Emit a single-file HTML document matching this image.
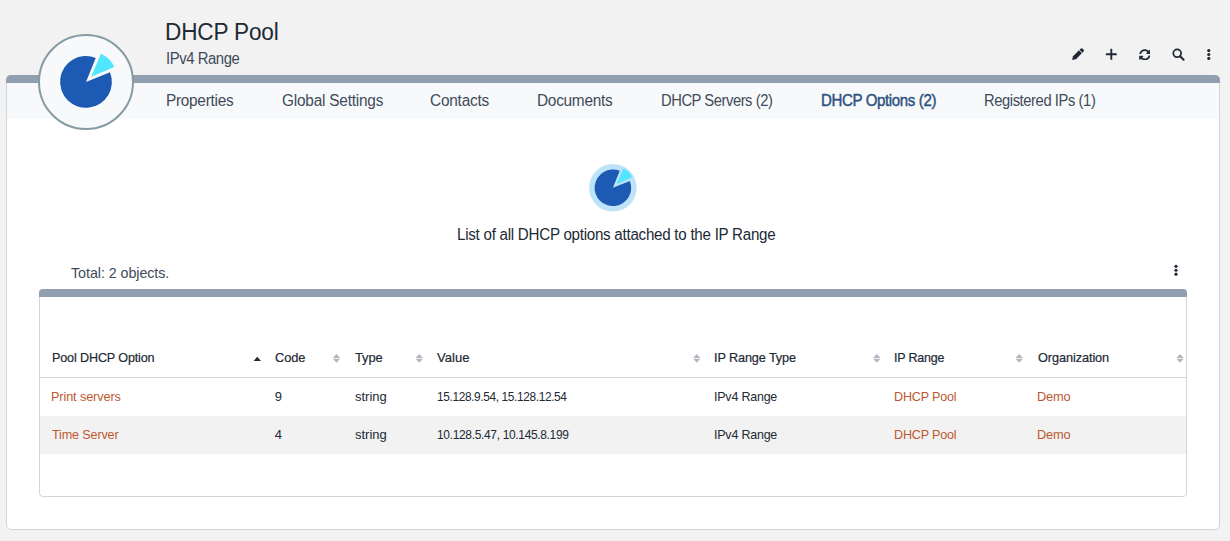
<!DOCTYPE html><html><head><meta charset="utf-8"><style>
html,body{margin:0;padding:0;}
body{width:1230px;height:541px;background:#f2f2f2;position:relative;overflow:hidden;font-family:"Liberation Sans",sans-serif;}
.t{position:absolute;white-space:nowrap;}
.abs{position:absolute;}
</style></head><body>
<div class="abs" style="left:6px;top:75px;width:1212px;height:453px;border:1px solid #ced6de;border-radius:5px;background:#fff;"></div>
<div class="abs" style="left:6px;top:75px;width:1214px;height:8px;background:#929fb1;border-radius:5px 5px 0 0;"></div>
<div class="abs" style="left:7px;top:83px;width:1212px;height:36px;background:#f8f9fa;"></div>
<div class="abs" style="left:38px;top:34px;width:92px;height:92px;border:2px solid #859ba3;border-radius:50%;background:#f8f9fa;"></div>
<svg class="abs" style="left:0;top:0" width="200" height="140"><path d="M86,81.9 L110.01,72.20 A25.9,25.9 0 1 1 95.70,57.89 Z" fill="#1c5ab4"/><path d="M91.13,76.77 L100.94,53.65 A25.122999999999998,25.122999999999998 0 0 1 114.25,66.96 Z" fill="#52e5ff"/></svg>
<svg class="abs" style="left:560px;top:140px" width="110" height="100"><circle cx="52.89999999999998" cy="47.80000000000001" r="23.8" fill="#bee3f8"/><path d="M52.89999999999998,47.80000000000001 L69.87,40.94 A18.3,18.3 0 1 1 59.76,30.83 Z" fill="#1c5ab4"/><path d="M56.78,43.92 L63.36,28.42 A16.836000000000002,16.836000000000002 0 0 1 72.28,37.34 Z" fill="#52e5ff"/></svg>
<div class="abs" style="left:39px;top:289px;width:1146px;height:206px;border:1px solid #ced6de;border-radius:4px;background:#fff;"></div>
<div class="abs" style="left:39px;top:289px;width:1148px;height:8px;background:#929fb1;border-radius:4px 4px 0 0;"></div>
<div class="abs" style="left:40px;top:377px;width:1146px;height:1px;background:#ced6de;"></div>
<div class="abs" style="left:40px;top:416px;width:1146px;height:38px;background:#f2f2f2;"></div>
<svg class="abs" style="left:0;top:0" width="1230" height="541"><g transform="translate(1077.6,54.6) rotate(-45)" fill="#212934"><path d="M-7.8,0 L-4.4,-2.05 L4.0,-2.05 L4.0,2.05 L-4.4,2.05 Z"/><path d="M4.8,-2.05 L6.3,-2.05 A1.5,1.5 0 0 1 7.8,-0.55 L7.8,0.55 A1.5,1.5 0 0 1 6.3,2.05 L4.8,2.05 Z"/></g><g fill="#212934"><rect x="1110.35" y="48.8" width="1.9" height="11" rx="0.6"/><rect x="1105.8" y="53.35" width="11" height="1.9" rx="0.6"/></g><g fill="none" stroke="#212934" stroke-width="1.75"><circle cx="1177.2" cy="53.3" r="3.9"/><path d="M1180.2,56.3 L1183.6,59.7" stroke-width="2.1" stroke-linecap="round"/></g><circle cx="1208.8" cy="50.60" r="1.6" fill="#212934"/><circle cx="1208.8" cy="54.50" r="1.6" fill="#212934"/><circle cx="1208.8" cy="58.40" r="1.6" fill="#212934"/><circle cx="1176" cy="266.30" r="1.6" fill="#212934"/><circle cx="1176" cy="270.25" r="1.6" fill="#212934"/><circle cx="1176" cy="274.20" r="1.6" fill="#212934"/><path d="M253.60000000000002,361.0 L257.3,356.7 L261.0,361.0 Z" fill="#212934"/><path d="M332.9,357.9 L336.5,353.9 L340.1,357.9 Z M332.9,358.79999999999995 L336.5,362.79999999999995 L340.1,358.79999999999995 Z" fill="#b1b6bf"/><path d="M415.7,357.9 L419.3,353.9 L422.90000000000003,357.9 Z M415.7,358.79999999999995 L419.3,362.79999999999995 L422.90000000000003,358.79999999999995 Z" fill="#b1b6bf"/><path d="M693.1999999999999,357.9 L696.8,353.9 L700.4,357.9 Z M693.1999999999999,358.79999999999995 L696.8,362.79999999999995 L700.4,358.79999999999995 Z" fill="#b1b6bf"/><path d="M873.1999999999999,357.9 L876.8,353.9 L880.4,357.9 Z M873.1999999999999,358.79999999999995 L876.8,362.79999999999995 L880.4,358.79999999999995 Z" fill="#b1b6bf"/><path d="M1015.6,357.9 L1019.2,353.9 L1022.8000000000001,357.9 Z M1015.6,358.79999999999995 L1019.2,362.79999999999995 L1022.8000000000001,358.79999999999995 Z" fill="#b1b6bf"/><path d="M1176.5,357.9 L1180.1,353.9 L1183.6999999999998,357.9 Z M1176.5,358.79999999999995 L1180.1,362.79999999999995 L1183.6999999999998,358.79999999999995 Z" fill="#b1b6bf"/></svg>
<svg class="abs" style="left:1138.6px;top:48.6px" width="11.6" height="11.6" viewBox="0 0 512 512"><path fill="#212934" d="M370.72 133.28C339.458 104.008 298.888 87.962 255.848 88c-77.458.068-144.328 53.178-162.791 126.85-1.344 5.363-6.122 9.15-11.651 9.15H24.103c-7.498 0-13.194-6.807-11.807-14.176C33.933 94.924 134.813 8 256 8c66.448 0 126.791 26.136 171.315 68.685L463.03 40.97C478.149 25.851 504 36.559 504 57.941V192c0 13.255-10.745 24-24 24H345.941c-21.382 0-32.09-25.851-16.971-40.971l41.75-41.749zM32 296h134.059c21.382 0 32.090 25.851 16.971 40.971l-41.75 41.75c31.262 29.273 71.835 45.319 114.876 45.28 77.418-.07 144.315-53.144 162.787-126.849 1.344-5.363 6.122-9.15 11.651-9.15h57.304c7.498 0 13.194 6.807 11.807 14.176C478.067 417.076 377.187 504 256 504c-66.448 0-126.791-26.136-171.315-68.685L48.970 471.030C33.851 486.149 8 475.441 8 454.059V320c0-13.255 10.745-24 24-24z"/></svg>
<div class="t" style="left:165.44px;top:20.50px;font-size:23px;line-height:23px;color:#212934;font-weight:400;letter-spacing:-0.173px;transform:scaleX(0.9821);transform-origin:0 0;">DHCP Pool</div>
<div class="t" style="left:166.07px;top:50.50px;font-size:16px;line-height:16px;color:#404b5a;font-weight:400;letter-spacing:-0.464px;transform:scaleX(0.9290);transform-origin:0 0;">IPv4 Range</div>
<div class="t" style="left:166.44px;top:92.50px;font-size:16px;line-height:16px;color:#404b5a;font-weight:400;letter-spacing:-0.246px;transform:scaleX(0.9558);transform-origin:0 0;">Properties</div>
<div class="t" style="left:281.54px;top:92.50px;font-size:16px;line-height:16px;color:#404b5a;font-weight:400;letter-spacing:-0.211px;transform:scaleX(0.9602);transform-origin:0 0;">Global Settings</div>
<div class="t" style="left:430.04px;top:92.50px;font-size:16px;line-height:16px;color:#404b5a;font-weight:400;letter-spacing:-0.232px;transform:scaleX(0.9623);transform-origin:0 0;">Contacts</div>
<div class="t" style="left:536.94px;top:92.50px;font-size:16px;line-height:16px;color:#404b5a;font-weight:400;letter-spacing:-0.271px;transform:scaleX(0.9610);transform-origin:0 0;">Documents</div>
<div class="t" style="left:660.78px;top:92.50px;font-size:16px;line-height:16px;color:#404b5a;font-weight:400;letter-spacing:-0.483px;transform:scaleX(0.9211);transform-origin:0 0;">DHCP Servers (2)</div>
<div class="t" style="left:820.56px;top:92.50px;font-size:16px;line-height:16px;color:#2c5282;font-weight:400;letter-spacing:-0.372px;-webkit-text-stroke:0.45px #2c5282;transform:scaleX(0.9381);transform-origin:0 0;">DHCP Options (2)</div>
<div class="t" style="left:983.68px;top:92.50px;font-size:16px;line-height:16px;color:#404b5a;font-weight:400;letter-spacing:-0.435px;transform:scaleX(0.9197);transform-origin:0 0;">Registered IPs (1)</div>
<div class="t" style="left:457.35px;top:226.50px;font-size:16px;line-height:16px;color:#212934;font-weight:400;letter-spacing:-0.274px;transform:scaleX(0.9465);transform-origin:0 0;">List of all DHCP options attached to the IP Range</div>
<div class="t" style="left:71.20px;top:265.75px;font-size:14.5px;line-height:14.5px;color:#404b5a;font-weight:400;letter-spacing:-0.061px;transform:scaleX(0.9856);transform-origin:0 0;">Total: 2 objects.</div>
<div class="t" style="left:51.83px;top:351.00px;font-size:13px;line-height:13px;color:#212934;font-weight:400;letter-spacing:-0.151px;-webkit-text-stroke:0.2px #212934;transform:scaleX(0.9692);transform-origin:0 0;">Pool DHCP Option</div>
<div class="t" style="left:274.80px;top:351.00px;font-size:13px;line-height:13px;color:#212934;font-weight:400;letter-spacing:-0.108px;-webkit-text-stroke:0.2px #212934;transform:scaleX(0.9845);transform-origin:0 0;">Code</div>
<div class="t" style="left:354.50px;top:351.00px;font-size:13px;line-height:13px;color:#212934;font-weight:400;letter-spacing:-0.067px;-webkit-text-stroke:0.2px #212934;transform:scaleX(0.9893);transform-origin:0 0;">Type</div>
<div class="t" style="left:437.00px;top:351.00px;font-size:13px;line-height:13px;color:#212934;font-weight:400;letter-spacing:0.075px;-webkit-text-stroke:0.2px #212934;">Value</div>
<div class="t" style="left:714.02px;top:351.00px;font-size:13px;line-height:13px;color:#212934;font-weight:400;letter-spacing:-0.116px;-webkit-text-stroke:0.2px #212934;transform:scaleX(0.9757);transform-origin:0 0;">IP Range Type</div>
<div class="t" style="left:893.64px;top:351.00px;font-size:13px;line-height:13px;color:#212934;font-weight:400;letter-spacing:-0.214px;-webkit-text-stroke:0.2px #212934;transform:scaleX(0.9592);transform-origin:0 0;">IP Range</div>
<div class="t" style="left:1037.50px;top:351.00px;font-size:13px;line-height:13px;color:#212934;font-weight:400;letter-spacing:-0.093px;-webkit-text-stroke:0.2px #212934;transform:scaleX(0.9795);transform-origin:0 0;">Organization</div>
<div class="t" style="left:51.43px;top:390.00px;font-size:13px;line-height:13px;color:#bd5830;font-weight:400;letter-spacing:-0.106px;transform:scaleX(0.9742);transform-origin:0 0;">Print servers</div>
<div class="t" style="left:274.80px;top:390.00px;font-size:13px;line-height:13px;color:#212934;font-weight:400;letter-spacing:0.000px;">9</div>
<div class="t" style="left:436.69px;top:390.00px;font-size:13px;line-height:13px;color:#212934;font-weight:400;letter-spacing:-0.398px;transform:scaleX(0.9134);transform-origin:0 0;">15.128.9.54, 15.128.12.54</div>
<div class="t" style="left:354.50px;top:390.00px;font-size:13px;line-height:13px;color:#212934;font-weight:400;letter-spacing:-0.008px;transform:scaleX(0.9981);transform-origin:0 0;">string</div>
<div class="t" style="left:714.14px;top:390.00px;font-size:13px;line-height:13px;color:#212934;font-weight:400;letter-spacing:-0.213px;transform:scaleX(0.9588);transform-origin:0 0;">IPv4 Range</div>
<div class="t" style="left:893.63px;top:390.00px;font-size:13px;line-height:13px;color:#bd5830;font-weight:400;letter-spacing:-0.186px;transform:scaleX(0.9668);transform-origin:0 0;">DHCP Pool</div>
<div class="t" style="left:1036.52px;top:390.00px;font-size:13px;line-height:13px;color:#bd5830;font-weight:400;letter-spacing:-0.136px;transform:scaleX(0.9824);transform-origin:0 0;">Demo</div>
<div class="t" style="left:52.40px;top:428.00px;font-size:13px;line-height:13px;color:#bd5830;font-weight:400;letter-spacing:-0.153px;transform:scaleX(0.9687);transform-origin:0 0;">Time Server</div>
<div class="t" style="left:274.80px;top:428.00px;font-size:13px;line-height:13px;color:#212934;font-weight:400;letter-spacing:0.000px;">4</div>
<div class="t" style="left:436.68px;top:428.00px;font-size:13px;line-height:13px;color:#212934;font-weight:400;letter-spacing:-0.358px;transform:scaleX(0.9213);transform-origin:0 0;">10.128.5.47, 10.145.8.199</div>
<div class="t" style="left:354.50px;top:428.00px;font-size:13px;line-height:13px;color:#212934;font-weight:400;letter-spacing:-0.008px;transform:scaleX(0.9981);transform-origin:0 0;">string</div>
<div class="t" style="left:714.14px;top:428.00px;font-size:13px;line-height:13px;color:#212934;font-weight:400;letter-spacing:-0.213px;transform:scaleX(0.9588);transform-origin:0 0;">IPv4 Range</div>
<div class="t" style="left:893.63px;top:428.00px;font-size:13px;line-height:13px;color:#bd5830;font-weight:400;letter-spacing:-0.186px;transform:scaleX(0.9668);transform-origin:0 0;">DHCP Pool</div>
<div class="t" style="left:1036.52px;top:428.00px;font-size:13px;line-height:13px;color:#bd5830;font-weight:400;letter-spacing:-0.136px;transform:scaleX(0.9824);transform-origin:0 0;">Demo</div>
</body></html>
